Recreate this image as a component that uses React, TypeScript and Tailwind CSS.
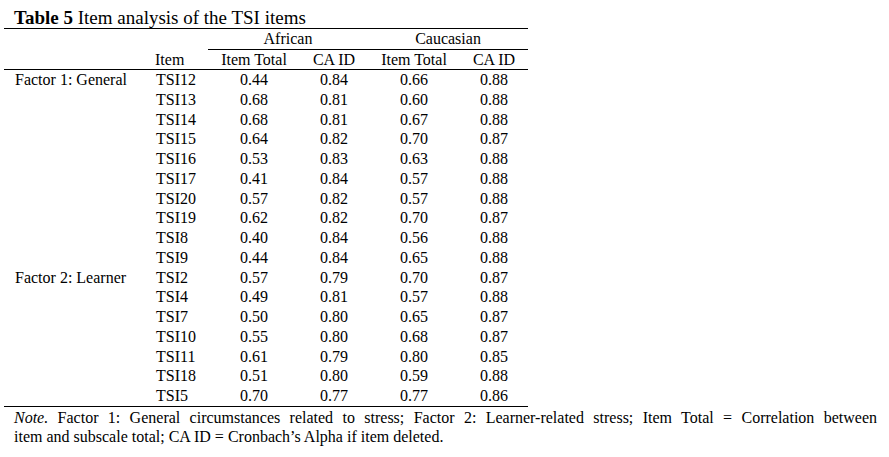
type Row = {
  factor?: string;
  item: string;
  afTotal: string;
  afCa: string;
  caTotal: string;
  caCa: string;
};

const rows: Row[] = [
  { factor: "Factor 1: General", item: "TSI12", afTotal: "0.44", afCa: "0.84", caTotal: "0.66", caCa: "0.88" },
  { item: "TSI13", afTotal: "0.68", afCa: "0.81", caTotal: "0.60", caCa: "0.88" },
  { item: "TSI14", afTotal: "0.68", afCa: "0.81", caTotal: "0.67", caCa: "0.88" },
  { item: "TSI15", afTotal: "0.64", afCa: "0.82", caTotal: "0.70", caCa: "0.87" },
  { item: "TSI16", afTotal: "0.53", afCa: "0.83", caTotal: "0.63", caCa: "0.88" },
  { item: "TSI17", afTotal: "0.41", afCa: "0.84", caTotal: "0.57", caCa: "0.88" },
  { item: "TSI20", afTotal: "0.57", afCa: "0.82", caTotal: "0.57", caCa: "0.88" },
  { item: "TSI19", afTotal: "0.62", afCa: "0.82", caTotal: "0.70", caCa: "0.87" },
  { item: "TSI8", afTotal: "0.40", afCa: "0.84", caTotal: "0.56", caCa: "0.88" },
  { item: "TSI9", afTotal: "0.44", afCa: "0.84", caTotal: "0.65", caCa: "0.88" },
  { factor: "Factor 2: Learner", item: "TSI2", afTotal: "0.57", afCa: "0.79", caTotal: "0.70", caCa: "0.87" },
  { item: "TSI4", afTotal: "0.49", afCa: "0.81", caTotal: "0.57", caCa: "0.88" },
  { item: "TSI7", afTotal: "0.50", afCa: "0.80", caTotal: "0.65", caCa: "0.87" },
  { item: "TSI10", afTotal: "0.55", afCa: "0.80", caTotal: "0.68", caCa: "0.87" },
  { item: "TSI11", afTotal: "0.61", afCa: "0.79", caTotal: "0.80", caCa: "0.85" },
  { item: "TSI18", afTotal: "0.51", afCa: "0.80", caTotal: "0.59", caCa: "0.88" },
  { item: "TSI5", afTotal: "0.70", afCa: "0.77", caTotal: "0.77", caCa: "0.86" },
];

const cols = "grid grid-cols-[143px_61px_92px_68px_92px_68px]";

export default function App() {
  return (
    <div className="h-[457px] w-[889px] bg-white font-['Liberation_Serif',serif] text-[16px] text-black">
      <div className="pl-[14px] pt-[8px] text-[19px] leading-[20px]">
        <b>Table 5</b> Item analysis of the TSI items
      </div>

      <div className="ml-[4px] w-[524px] border-t border-black">
        <div className={`${cols} h-[21px] leading-[20px]`}>
          <div className="col-span-2" />
          <div className="col-span-2 border-b border-black text-center">African</div>
          <div className="col-span-2 border-b border-black text-center">Caucasian</div>
        </div>

        <div className={`${cols} h-[20px] border-b border-black leading-[19px]`}>
          <div />
          <div className="pl-[8px]">Item</div>
          <div className="text-center">Item Total</div>
          <div className="text-center">CA ID</div>
          <div className="text-center">Item Total</div>
          <div className="text-center">CA ID</div>
        </div>

        <div className="border-b border-black">
          {rows.map((r) => (
            <div key={r.item} className={`${cols} h-[19.76px] leading-[19.76px]`}>
              <div className="pl-[11px]">{r.factor ?? ""}</div>
              <div className="pl-[9px]">{r.item}</div>
              <div className="text-center">{r.afTotal}</div>
              <div className="text-center">{r.afCa}</div>
              <div className="text-center">{r.caTotal}</div>
              <div className="text-center">{r.caCa}</div>
            </div>
          ))}
        </div>
      </div>

      <div className="ml-[14px] w-[863px] pt-[1px] leading-[19px]">
        <p className="text-justify [text-align-last:justify]">
          <i>Note.</i> Factor 1: General circumstances related to stress; Factor 2: Learner-related stress; Item
          Total = Correlation between
        </p>
        <p>item and subscale total; CA ID = Cronbach’s Alpha if item deleted.</p>
      </div>
    </div>
  );
}
